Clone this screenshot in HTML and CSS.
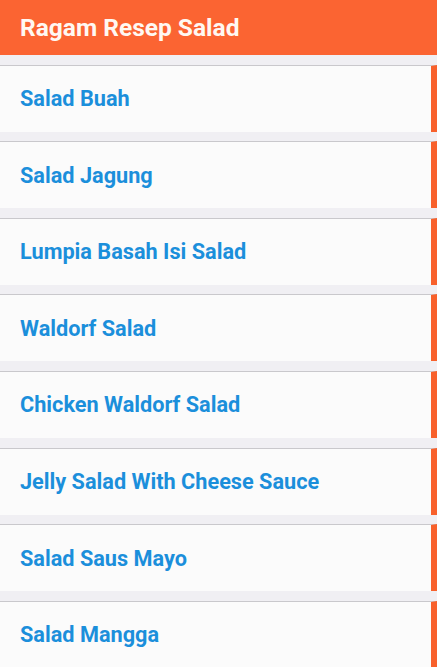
FILE: index.html
```html
<!DOCTYPE html>
<html>
<head>
<meta charset="utf-8">
<link rel="stylesheet" href="styles.css">
</head>
<body>
<header class="bar">Ragam Resep Salad</header>
<ul class="list">
  <li class="item"><span class="label">Salad Buah</span></li>
  <li class="item"><span class="label">Salad Jagung</span></li>
  <li class="item"><span class="label">Lumpia Basah Isi Salad</span></li>
  <li class="item"><span class="label">Waldorf Salad</span></li>
  <li class="item"><span class="label">Chicken Waldorf Salad</span></li>
  <li class="item"><span class="label">Jelly Salad With Cheese Sauce</span></li>
  <li class="item"><span class="label">Salad Saus Mayo</span></li>
  <li class="item"><span class="label">Salad Mangga</span></li>
</ul>
</body>
</html>
```
FILE: styles.css
```css
html, body {
  margin: 0;
  padding: 0;
  height: 100%;
  overflow: hidden;
  background: #f0eff3;
  font-family: Roboto, "Liberation Sans", sans-serif;
}
.bar {
  height: 55px;
  box-sizing: border-box;
  background: #fb6432;
  color: #fff8f2;
  font-weight: 700;
  font-size: 24.5px;
  display: flex;
  align-items: center;
  padding: 0 0 1px 20px;
}
.list {
  list-style: none;
  margin: 0;
  padding: 0;
}
.item {
  margin-top: 9.6px;
  border-top: 1px solid #c9c8cc;
  border-right: 6px solid #f8612c;
  background: #fbfbfb;
  height: 66px;
  display: flex;
  align-items: center;
  padding-left: 20px;
}
.label {
  color: #1b8fdb;
  font-weight: 700;
  font-size: 21.7px;
}
```
